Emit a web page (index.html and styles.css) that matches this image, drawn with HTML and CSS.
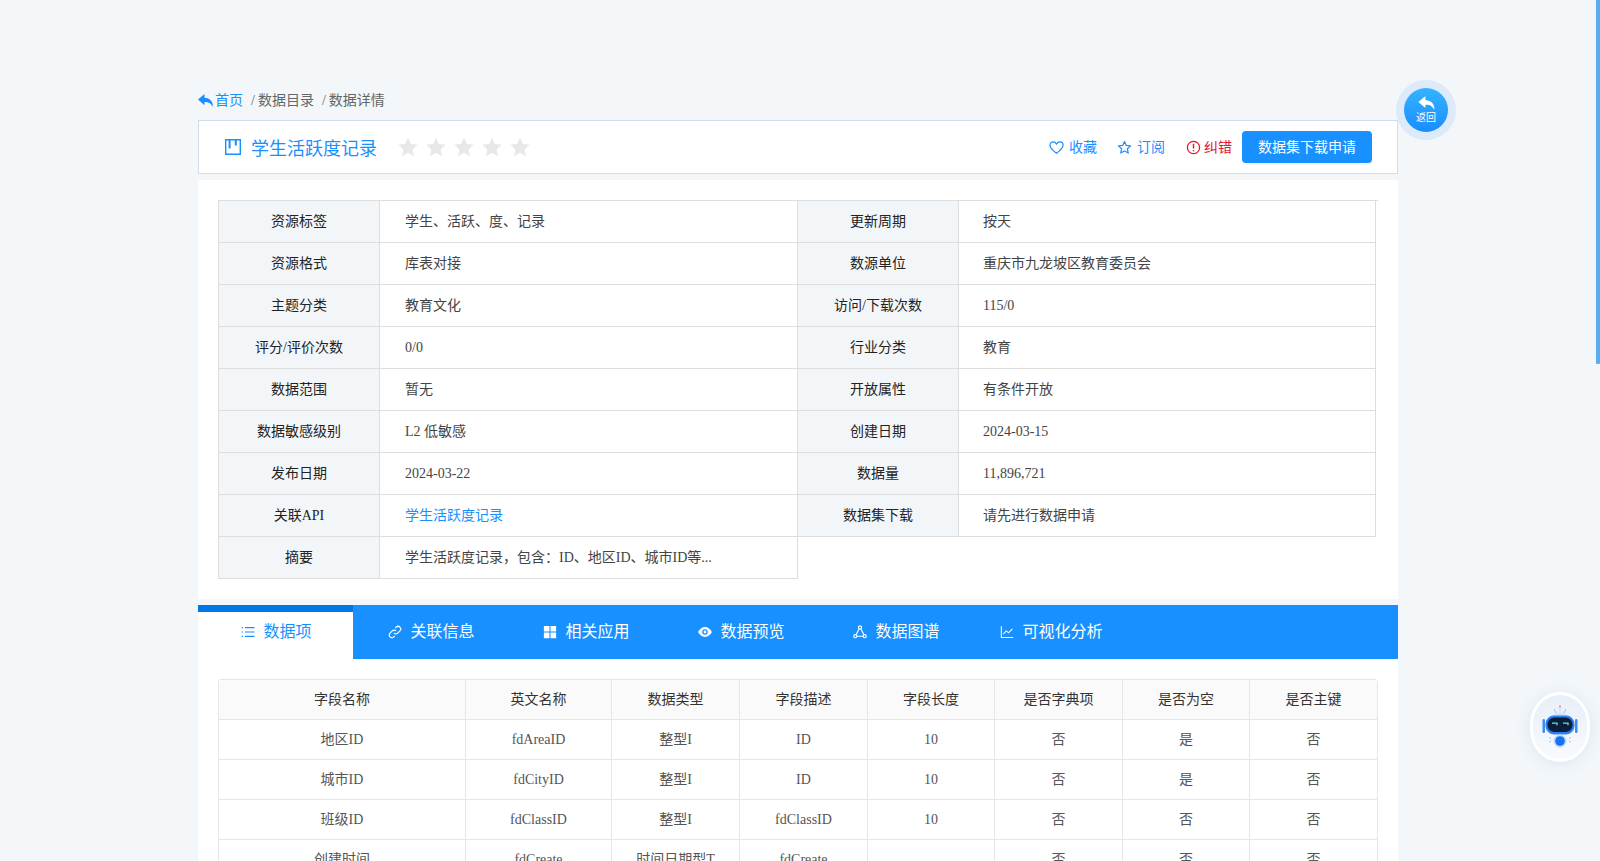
FILE: index.html
```html
<!DOCTYPE html>
<html lang="zh-CN">
<head>
<meta charset="utf-8">
<title>数据详情</title>
<link rel="stylesheet" href="styles.css">
</head>
<body>
<div class="scrollbar"></div>
<main class="wrap">
  <nav class="crumbs">
    <a class="home"><svg class="ic-home" viewBox="0 0 15 13"><path d="M6.500 0 0 5.600l6.500 5.600V8.100c3.700-.2 6 .8 8.300 4.700.4-5-2.500-8.400-8.300-9z" fill="currentColor"/></svg>首页</a>
    <span class="sep">/</span><span>数据目录</span>
    <span class="sep sep2">/</span><span>数据详情</span>
  </nav>
  <header class="titlebar">
    <svg class="ic-title" viewBox="0 0 16 16"><path d="M.7.700h14.600v14.600H.7z" fill="none" stroke="currentColor" stroke-width="1.400"/><path d="M3.600 1h2v8.500h-2zM9.800 1h2v5.500h-2z" fill="currentColor"/></svg>
    <h1>学生活跃度记录</h1>
    <div class="stars">
      <svg viewBox="0 0 20 20"><path d="M10 .8l2.900 6.200 6.700.8-5 4.600 1.300 6.700-5.900-3.300-5.900 3.300 1.300-6.700-5-4.600 6.700-.8z"/></svg>
      <svg viewBox="0 0 20 20"><path d="M10 .8l2.900 6.200 6.700.8-5 4.600 1.300 6.700-5.900-3.300-5.900 3.300 1.300-6.700-5-4.600 6.700-.8z"/></svg>
      <svg viewBox="0 0 20 20"><path d="M10 .8l2.900 6.200 6.700.8-5 4.600 1.300 6.700-5.900-3.300-5.900 3.300 1.300-6.700-5-4.600 6.700-.8z"/></svg>
      <svg viewBox="0 0 20 20"><path d="M10 .8l2.900 6.200 6.700.8-5 4.600 1.300 6.700-5.900-3.300-5.900 3.300 1.300-6.700-5-4.600 6.700-.8z"/></svg>
      <svg viewBox="0 0 20 20"><path d="M10 .8l2.900 6.200 6.700.8-5 4.600 1.300 6.700-5.900-3.300-5.900 3.300 1.300-6.700-5-4.600 6.700-.8z"/></svg>
    </div>
    <div class="actions">
      <a class="act"><svg viewBox="0 0 16 16"><path d="M8 14.200C3.400 10.600 1 8.300 1 5.500 1 3.500 2.500 2 4.400 2 5.800 2 7.200 2.800 8 4.200 8.800 2.800 10.200 2 11.600 2 13.500 2 15 3.500 15 5.500c0 2.800-2.400 5.100-7 8.700z" fill="none" stroke="currentColor" stroke-width="1.300"/></svg>收藏</a>
      <a class="act sub"><svg viewBox="0 0 16 16"><path d="M8 1.600l1.900 4.200 4.600.5-3.400 3.100.9 4.500L8 11.700l-4 2.200.9-4.500L1.500 6.300l4.600-.5z" fill="none" stroke="currentColor" stroke-width="1.300" stroke-linejoin="round"/></svg>订阅</a>
      <a class="act err"><svg viewBox="0 0 16 16"><circle cx="8" cy="8" r="6.500" fill="none" stroke="currentColor" stroke-width="1.300"/><path d="M8 4v5M8 10.600v1.400" stroke="currentColor" stroke-width="1.500"/></svg>纠错</a>
      <button class="apply">数据集下载申请</button>
    </div>
  </header>
  <section class="panel">
    <div class="info">
      <div class="item"><div class="k">资源标签</div><div class="v">学生、活跃、度、记录</div></div>
      <div class="item"><div class="k">更新周期</div><div class="v">按天</div></div>
      <div class="item"><div class="k">资源格式</div><div class="v">库表对接</div></div>
      <div class="item"><div class="k">数源单位</div><div class="v">重庆市九龙坡区教育委员会</div></div>
      <div class="item"><div class="k">主题分类</div><div class="v">教育文化</div></div>
      <div class="item"><div class="k">访问/下载次数</div><div class="v">115/0</div></div>
      <div class="item"><div class="k">评分/评价次数</div><div class="v">0/0</div></div>
      <div class="item"><div class="k">行业分类</div><div class="v">教育</div></div>
      <div class="item"><div class="k">数据范围</div><div class="v">暂无</div></div>
      <div class="item"><div class="k">开放属性</div><div class="v">有条件开放</div></div>
      <div class="item"><div class="k">数据敏感级别</div><div class="v">L2 低敏感</div></div>
      <div class="item"><div class="k">创建日期</div><div class="v">2024-03-15</div></div>
      <div class="item"><div class="k">发布日期</div><div class="v">2024-03-22</div></div>
      <div class="item"><div class="k">数据量</div><div class="v">11,896,721</div></div>
      <div class="item"><div class="k">关联API</div><div class="v"><a class="link">学生活跃度记录</a></div></div>
      <div class="item"><div class="k">数据集下载</div><div class="v">请先进行数据申请</div></div>
      <div class="item"><div class="k">摘要</div><div class="v">学生活跃度记录，包含：ID、地区ID、城市ID等...</div></div>
    </div>
  </section>
  <section class="tabs-panel">
    <div class="tabs">
      <a class="tab active"><svg viewBox="0 0 16 16"><path d="M4.500 3h11M4.500 8h11M4.500 13h11M.8 3h1.600M.8 8h1.600M.8 13h1.600" stroke="currentColor" stroke-width="1.200" fill="none"/></svg>数据项</a>
      <a class="tab"><svg viewBox="0 0 16 16"><path d="M6.800 9.200a3 3 0 0 0 4.300 0l2.500-2.500a3 3 0 0 0-4.300-4.300L8.300 3.400M9.200 6.800a3 3 0 0 0-4.300 0L2.400 9.300a3 3 0 0 0 4.300 4.300l1-1" fill="none" stroke="currentColor" stroke-width="1.300"/></svg>关联信息</a>
      <a class="tab"><svg viewBox="0 0 16 16"><path d="M1 1h6.400v6.400H1zM8.600 1H15v6.400H8.600zM1 8.600h6.400V15H1zM8.600 8.600H15V15H8.600z" fill="currentColor"/></svg>相关应用</a>
      <a class="tab"><svg viewBox="0 0 16 16"><path fill-rule="evenodd" d="M8 2.300C4.700 2.300 1.800 4.600 0 8c1.800 3.400 4.700 5.700 8 5.700s6.200-2.300 8-5.700c-1.800-3.400-4.700-5.700-8-5.700zM8 11.200a3.200 3.200 0 1 1 0-6.400 3.200 3.200 0 0 1 0 6.400zm0-1.600a1.600 1.600 0 1 0 0-3.200 1.600 1.600 0 0 0 0 3.200z" fill="currentColor"/></svg>数据预览</a>
      <a class="tab"><svg viewBox="0 0 16 16"><g fill="none" stroke="currentColor" stroke-width="1.300"><circle cx="8" cy="2.800" r="1.800"/><circle cx="2.600" cy="12.800" r="1.800"/><circle cx="13.400" cy="12.800" r="1.800"/><path d="M7.100 4.400 3.500 11.200M8.900 4.400l3.600 6.800M4.400 12.800h7.200"/></g></svg>数据图谱</a>
      <a class="tab"><svg viewBox="0 0 16 16"><path d="M1.500 1.500v12.800h13.500M3.800 10.500l3.400-3.800 2.600 2.200 4.400-4.400" fill="none" stroke="currentColor" stroke-width="1.200"/></svg>可视化分析</a>
    </div>
    <div class="tab-body">
      <table class="fields">
        <thead>
          <tr><th class="c1">字段名称</th><th class="c2">英文名称</th><th class="c3">数据类型</th><th class="c4">字段描述</th><th class="c5">字段长度</th><th class="c6">是否字典项</th><th class="c7">是否为空</th><th>是否主键</th></tr>
        </thead>
        <tbody>
          <tr><td>地区ID</td><td>fdAreaID</td><td>整型I</td><td>ID</td><td>10</td><td>否</td><td>是</td><td>否</td></tr>
          <tr><td>城市ID</td><td>fdCityID</td><td>整型I</td><td>ID</td><td>10</td><td>否</td><td>是</td><td>否</td></tr>
          <tr><td>班级ID</td><td>fdClassID</td><td>整型I</td><td>fdClassID</td><td>10</td><td>否</td><td>否</td><td>否</td></tr>
          <tr><td>创建时间</td><td>fdCreate</td><td>时间日期型T</td><td>fdCreate</td><td></td><td>否</td><td>否</td><td>否</td></tr>
        </tbody>
      </table>
    </div>
  </section>
</main>
<a class="back"><span class="back-in"><svg viewBox="0 0 15 13"><path d="M6.500 0 0 5.600l6.500 5.600V8.100c3.700-.2 6 .8 8.300 4.700.4-5-2.500-8.400-8.300-9z" fill="currentColor"/></svg><em>返回</em></span></a>
<a class="bot">
  <svg viewBox="0 0 40 44">
    <circle cx="20" cy="1.500" r="1.200" fill="#e8a7a0"/>
    <path d="M20 2.500v4" stroke="#c9d8ea" stroke-width="1"/>
    <path d="M14 4l2 4M26 4l-2 4" stroke="#9cc6f5" stroke-width="1"/>
    <path d="M9 13q11-11 22 0v4H9z" fill="#d5e6fa"/>
    <rect x="2.500" y="14" width="2.500" height="14" rx="1.200" fill="#3b8ef0"/>
    <rect x="35" y="14" width="2.500" height="14" rx="1.200" fill="#3b8ef0"/>
    <rect x="5.500" y="10.500" width="29" height="19" rx="8.500" fill="#2b7fee"/>
    <rect x="7.500" y="12.500" width="25" height="14.500" rx="7" fill="#0b1f3a"/>
    <path d="M12 18.200h5v2M23 18.200h5v2" fill="none" stroke="#5fe6d8" stroke-width="1.300"/>
    <circle cx="20" cy="36" r="6.500" fill="#bcdafa"/>
    <circle cx="20" cy="36" r="4.800" fill="#1672f0"/>
    <path d="M9 32l2 2M9 37l2-1M31 32l-2 2M31 37l-2-1" stroke="#9cc6f5" stroke-width="1"/>
  </svg>
</a>
</body>
</html>
```
FILE: styles.css
```css
* { box-sizing: border-box; }
body {
  margin: 0;
  height: 861px;
  overflow: hidden;
  background: #f3f7fa;
  color: #333;
  font: 14px/1.5 "Liberation Serif", "Noto Sans CJK SC", serif;
}
a { color: inherit; text-decoration: none; }
svg { display: block; flex: none; }

.scrollbar {
  position: fixed; top: 0; right: 0;
  width: 4px; height: 364px;
  background: #5aaef0;
  border-radius: 0 0 1px 1px;
}
.wrap { width: 1200px; margin-left: 198px; padding-top: 90px; }

.crumbs {
  display: flex; align-items: center;
  height: 21px; color: #666;
}
.home { display: flex; align-items: center; color: #1890ff; }
.ic-home { width: 15px; height: 13px; margin-right: 2px; }
.sep { margin: 0 3px 0 8px; }
.sep2 { margin-left: 8px; }

.titlebar {
  display: flex; align-items: center;
  height: 54px; margin-top: 9px;
  padding: 0 25px 0 26px;
  background: #fff;
  border: 1px solid #d0dcea;
}
.ic-title { width: 16px; height: 16px; color: #1890ff; }
.titlebar h1 {
  margin: 4px 0 0 10px;
  font-size: 18px; font-weight: 400; line-height: 27px;
  color: #1890ff;
}
.stars { display: flex; gap: 8px; margin-left: 21px; }
.stars svg { width: 20px; height: 20px; fill: #e8e8e8; }
.actions { display: flex; align-items: center; margin-left: auto; }
.act { display: flex; align-items: center; color: #1890ff; margin-right: 20px; white-space: nowrap; }
.act svg { width: 15px; height: 15px; margin-right: 5px; }
.sub { margin-right: 21px; }
.err { color: #e0142d; margin-right: 10px; }
.err svg { margin-right: 3px; }
.apply {
  width: 130px; height: 32px;
  border: 0; border-radius: 4px;
  background: #1890ff; color: #fff;
  font: inherit;
  box-shadow: 0 2px 0 rgba(0,0,0,.04);
  padding: 0;
}

.panel {
  background: #fff;
  margin-top: 6px;
  padding: 20px;
  height: 419px;
}
.info {
  display: grid;
  grid-template-columns: 580px 578px;
  grid-auto-rows: 42px;
  width: 1160px;
  border-top: 1px solid #ddd;
}
.item {
  display: flex;
  border-bottom: 1px solid #ddd;
  border-right: 1px solid #ddd;
}
.item:nth-child(odd) { border-left: 1px solid #ddd; }
.k {
  flex: none; width: 161px;
  display: flex; align-items: center; justify-content: center;
  background: #f3f6f9;
  border-right: 1px solid #ddd;
  color: #222;
}
.v {
  flex: 1; display: flex; align-items: center;
  padding-left: 25px; color: #444;
}
.item:nth-child(even) .v { padding-left: 24px; }
.link { color: #1890ff; }

.tabs-panel { margin-top: 6px; background: #fff; }
.tabs {
  display: flex;
  height: 54px;
  background: #1890ff;
  color: #fff;
  font-size: 16px;
}
.tab {
  display: flex; align-items: center; justify-content: center;
  width: 155px;
  padding-left: 2px;
  white-space: nowrap;
}
.tab svg { width: 14px; height: 14px; margin-right: 8px; }
.tab.active {
  background: #fff; color: #1890ff;
  border-top: 7px solid #0077e6;
  padding-bottom: 7px;
}
.tab-body { padding: 20px; }
.fields {
  width: 1160px;
  table-layout: fixed;
  border-collapse: separate;
  border-spacing: 0;
  border: 1px solid #e6e6e6;
  border-bottom: 0;
  border-radius: 4px 4px 0 0;
}
.fields th, .fields td {
  height: 40px; padding: 0;
  text-align: center; font-weight: 400;
  border-right: 1px solid #e6e6e6;
  border-bottom: 1px solid #e6e6e6;
}
.fields th:last-child, .fields td:last-child { border-right: 0; }
.fields th { background: #fafafa; color: #333; }
.fields td { color: #555; }
.c1 { width: 247px; }
.c2 { width: 146px; }
.c3 { width: 128px; }
.c4 { width: 128px; }
.c5 { width: 127px; }
.c6 { width: 128px; }
.c7 { width: 127px; }

.back {
  position: fixed; left: 1396px; top: 80px;
  width: 60px; height: 60px; border-radius: 50%;
  background: #dceafa;
  display: flex; align-items: center; justify-content: center;
}
.back-in {
  width: 44px; height: 44px; border-radius: 50%;
  background: linear-gradient(#34b4ff, #1a8cff);
  color: #fff;
  display: flex; flex-direction: column; align-items: center; justify-content: center;
}
.back-in svg { width: 17px; height: 14px; }
.back-in em { font-style: normal; font-size: 10px; line-height: 12px; margin-top: 2px; }

.bot {
  position: fixed; left: 1530px; top: 692px;
  width: 60px; height: 70px; border-radius: 50% / 46%;
  background: linear-gradient(#e8eff9, #f8fafd);
  border: 3px solid #fff;
  box-shadow: 0 2px 16px rgba(80,120,170,.14);
  display: flex; align-items: center; justify-content: center;
}
.bot svg { width: 40px; height: 44px; }
```
